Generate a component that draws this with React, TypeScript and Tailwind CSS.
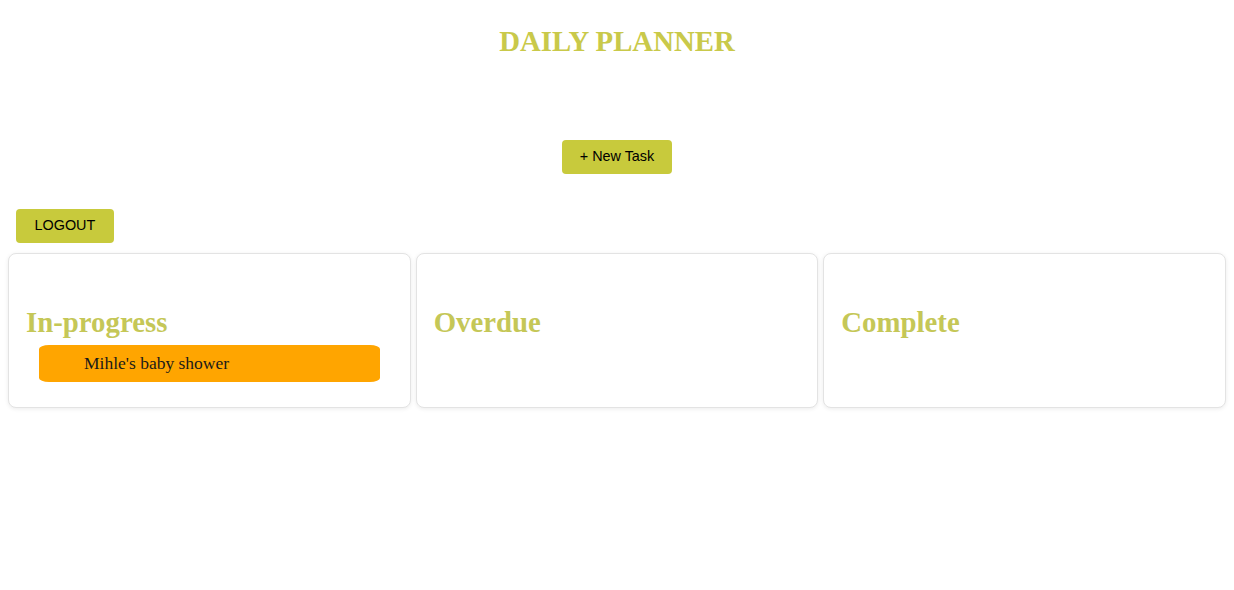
export default function App() {
  const serif = { fontFamily: '"Liberation Serif", "Times New Roman", serif' };
  const sans = { fontFamily: '"Liberation Sans", Arial, sans-serif' };
  const columns = [
    { title: "In-progress", tasks: ["Mihle's baby shower"] },
    { title: "Overdue", tasks: [] as string[] },
    { title: "Complete", tasks: [] as string[] },
  ];
  return (
    <div className="w-full min-h-[590px] bg-white px-[8px]">
      <h1
        className="pt-[25px] text-center text-[28.8px] font-bold leading-[32px] text-[#c9c94a]"
        style={serif}
      >
        DAILY PLANNER
      </h1>
      <div className="mt-[83px] flex justify-center">
        <button
          className="h-[34px] rounded-[4px] bg-[#c8ca3c] px-[18px] text-[14.4px] text-black"
          style={sans}
        >
          + New Task
        </button>
      </div>
      <div className="mt-[35px] pl-[8px]">
        <button
          className="h-[34px] rounded-[4px] bg-[#c8ca3c] px-[18.5px] text-[14.4px] text-black"
          style={sans}
        >
          LOGOUT
        </button>
      </div>
      <div className="mt-[10px] grid grid-cols-3 gap-[5px]">
        {columns.map((c) => (
          <div
            key={c.title}
            className="h-[155px] rounded-[8px] border border-[#e3e3e3] bg-white px-[17px] pt-[52px] shadow-[0_1px_4px_rgba(0,0,0,0.08)]"
          >
            <h2
              className="text-[28.8px] font-bold leading-[32px] text-[#c5c757]"
              style={serif}
            >
              {c.title}
            </h2>
            {c.tasks.map((t) => (
              <div
                key={t}
                className="mx-[13px] mt-[7px] flex h-[37px] items-center rounded-[10px/4px] bg-[#ffa500] pl-[45px] text-[17.5px] text-[#1a1a1a]"
                style={serif}
              >
                {t}
              </div>
            ))}
          </div>
        ))}
      </div>
    </div>
  );
}
